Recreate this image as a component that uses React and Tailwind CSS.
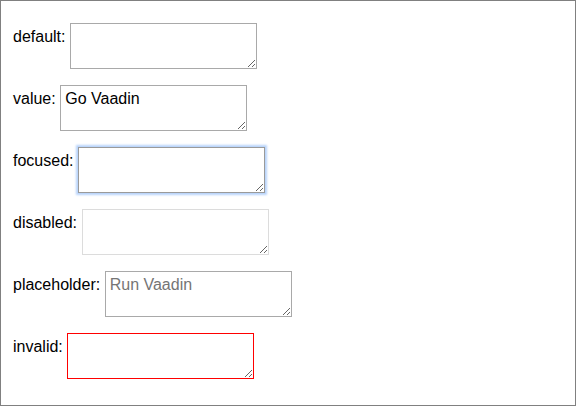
import React from 'react';

const base =
  "block w-[187px] h-[46px] px-[4px] pt-[4px] pb-[4px] text-[16px] leading-[18px] bg-white border outline-none resize";

const Row = ({ label, children }) => (
  <div className="flex items-start gap-[4.5px]">
    <label className="pt-[5px] text-[16px] leading-[18px] text-black">{label}</label>
    {children}
  </div>
);

const App = () => {
  return (
    <div
      className="w-[576px] h-[406px] border border-[#808080] bg-white pl-[12px] pt-[22px]"
      style={{ fontFamily: '"Liberation Sans", Arial, sans-serif' }}
    >
      <div className="flex flex-col gap-[16px]">
        <Row label="default:">
          <textarea className={`${base} border-[#a9a9a9]`} />
        </Row>
        <Row label="value:">
          <textarea className={`${base} border-[#a9a9a9] text-black`} defaultValue="Go Vaadin" />
        </Row>
        <Row label="focused:">
          <textarea className={`${base} border-[#9a9a9a] shadow-[0_0_2px_2px_#b8d4fb]`} />
        </Row>
        <Row label="disabled:">
          <textarea className={`${base} border-[#dcdcdc] bg-white`} disabled />
        </Row>
        <Row label="placeholder:">
          <textarea className={`${base} border-[#a9a9a9] placeholder:text-[#757575]`} placeholder="Run Vaadin" />
        </Row>
        <Row label="invalid:">
          <textarea className={`${base} border-[#ff0000]`} />
        </Row>
      </div>
    </div>
  );
};

export default App;
